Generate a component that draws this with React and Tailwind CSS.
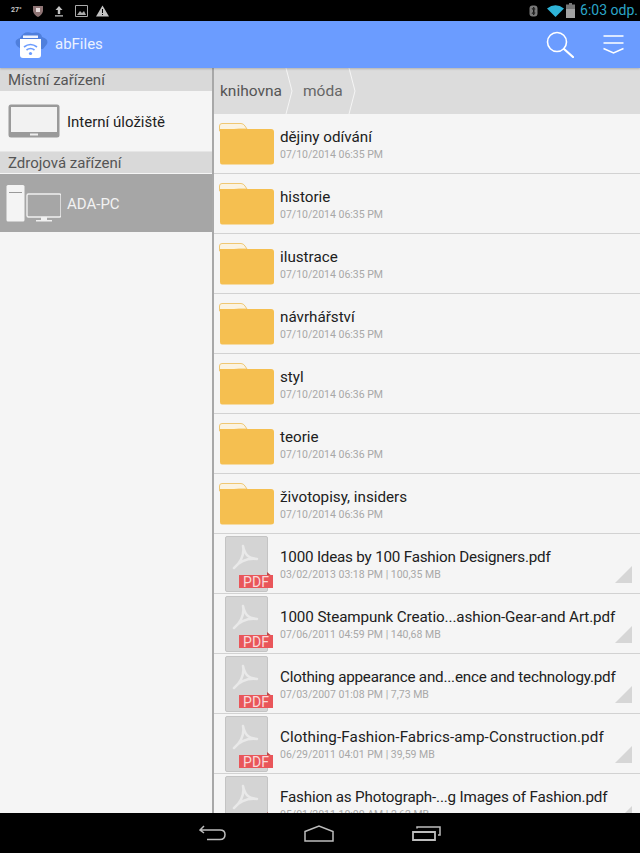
import React from "react";

const Folder = () => (
  <svg width="56" height="42" viewBox="0 0 56 42" className="shrink-0">
    <path d="M0.5 8 V3 Q0.5 0.5 3 0.5 H22 Q24.5 0.5 26 3 L28 6 H20 Z" fill="#fbf3e0" stroke="#f0c873" strokeWidth="1" />
    <path d="M1 6 H52 Q55 6 55 9 V39 Q55 41.5 52 41.5 H3 Q1 41.5 1 39 Z" fill="#f5bf50" />
  </svg>
);

const Pdf = () => (
  <div className="relative w-[50px] h-[56px] shrink-0">
    <div className="absolute left-0 top-0 w-[43px] h-[56px] bg-[#d4d4d4] border border-[#c4c4c4] rounded-[2px]" />
    <svg width="43" height="40" viewBox="0 0 43 40" className="absolute left-0 top-0">
      <path d="M18 10 C20 18 22 22 32 23 M32 23 C22 22 14 26 9 32 M18 10 C20 20 14 28 9 32" fill="none" stroke="#e9e9e9" strokeWidth="2.5" strokeLinecap="round" />
    </svg>
    <svg width="6" height="6" viewBox="0 0 6 6" className="absolute left-[42px] top-[36px]"><path d="M0 0 L6 5 V6 H0 Z" fill="#b94a4a" /></svg>
    <div className="absolute left-[14px] top-[39px] w-[34px] h-[13px] bg-[#e9565a] text-[#f9dada] text-[14px] leading-[14px] text-center">PDF</div>
  </div>
);

const Row = ({ pdf, name, meta, track }) => (
  <div className={`h-[60px] shrink-0 relative flex items-center border-b border-[#d2d2d2] ${pdf ? "pl-[11px]" : "pl-[5px]"}`}>
    {pdf ? <Pdf /> : <div className="pt-[1px]"><Folder /></div>}
    <div className="ml-[5px] flex flex-col pt-[2px]">
      <div className={`text-[15.2px] leading-[19px] text-[#202020] whitespace-nowrap ${track || ""}`}>{name}</div>
      <div className="mt-[1px] text-[10.5px] leading-[14px] text-[#a8a8a8] whitespace-nowrap">{meta}</div>
    </div>
    {pdf && (
      <svg width="17" height="17" viewBox="0 0 17 17" className="absolute right-[8px] bottom-[10px]"><path d="M17 0 V17 H0 Z" fill="#d6d6d6" /></svg>
    )}
  </div>
);

const rows = [
  { name: "dějiny odívání", meta: "07/10/2014 06:35 PM" },
  { name: "historie", meta: "07/10/2014 06:35 PM" },
  { name: "ilustrace", meta: "07/10/2014 06:35 PM" },
  { name: "návrhářství", meta: "07/10/2014 06:35 PM" },
  { name: "styl", meta: "07/10/2014 06:36 PM" },
  { name: "teorie", meta: "07/10/2014 06:36 PM" },
  { name: "životopisy, insiders", meta: "07/10/2014 06:36 PM" },
  { pdf: true, track: "tracking-[-0.2px]", name: "1000 Ideas by 100 Fashion Designers.pdf", meta: "03/02/2013 03:18 PM | 100,35 MB" },
  { pdf: true, track: "tracking-[-0.1px]", name: "1000 Steampunk Creatio...ashion-Gear-and Art.pdf", meta: "07/06/2011 04:59 PM | 140,68 MB" },
  { pdf: true, track: "tracking-[-0.2px]", name: "Clothing appearance and...ence and technology.pdf", meta: "07/03/2007 01:08 PM | 7,73 MB" },
  { pdf: true, track: "tracking-[0.1px]", name: "Clothing-Fashion-Fabrics-amp-Construction.pdf", meta: "06/29/2011 04:01 PM | 39,59 MB" },
  { pdf: true, track: "tracking-[-0.17px]", name: "Fashion as Photograph-...g Images of Fashion.pdf", meta: "05/01/2011 10:00 AM | 2,62 MB" },
];

export default function App() {
  return (
    <div className="w-[640px] h-[853px] flex flex-col overflow-hidden bg-[#f5f5f5] font-['Roboto',sans-serif]">
      {/* status bar */}
      <div className="h-[21px] shrink-0 bg-black flex items-center pl-[11px] pr-[2px] text-[#b4b4b4]">
        <span className="text-[7px] font-bold w-[21px] text-[#c8c8c8]">27°</span>
        <svg width="12" height="12" viewBox="0 0 12 12"><path d="M1 1 H11 V6 Q10 10 6 12 Q2 10 1 6 Z" fill="#8f7474" /><path d="M4 3 H8 V7 H4 Z" fill="#e8dcdc" /></svg>
        <svg width="10" height="12" viewBox="0 0 10 12" className="ml-[10px]"><path d="M5 1 L8.5 5 H6.2 V9 H3.8 V5 H1.5 Z M1 10.3 H9 V11.5 H1 Z" fill="#c4c4c4" /></svg>
        <svg width="13" height="12" viewBox="0 0 13 12" className="ml-[11px]"><path d="M0.5 0.5 H12.5 V11.5 H0.5 Z" fill="none" stroke="#aaa" /><path d="M2 10 L5 6 L7 8 L9 6 L11 10 Z" fill="#aaa" /></svg>
        <svg width="13" height="12" viewBox="0 0 13 12" className="ml-[8px]"><path d="M6.5 0.5 L13 11.5 H0 Z" fill="#c4c4c4" /><path d="M6 4 H7 V8 H6 Z M6 9 H7 V10 H6 Z" fill="#000" /></svg>
        <div className="flex-1" />
        <svg width="9" height="12" viewBox="0 0 9 12"><rect x="0.5" y="0.5" width="8" height="11" rx="3" fill="#7a7a7a" /><path d="M3 3 L6 8 L4.5 10 V2 L6 4 L3 9" fill="none" stroke="#111" strokeWidth="0.8" /></svg>
        <svg width="17" height="12" viewBox="0 0 17 12" className="ml-[9px]"><path d="M0 3.5 Q8.5 -3 17 3.5 L8.5 12 Z" fill="#2fb4d8" /></svg>
        <svg width="9" height="15" viewBox="0 0 9 15" className="ml-[2px]"><path d="M3 0 H6 V1.5 H9 V15 H0 V1.5 H3 Z" fill="#777" /><path d="M0 6 H9 V15 H0 Z" fill="#a2a2a2" /></svg>
        <span className="ml-[5px] text-[14px] text-[#2ba6c8]">6:03 odp.</span>
      </div>

      {/* action bar */}
      <div className="h-[47px] shrink-0 bg-[#6b9cff] flex items-center pl-[15px] pr-[16px] shadow-[0_1px_2px_rgba(0,0,0,0.2)] z-10">
        <svg width="33" height="28" viewBox="0 0 33 28">
          <path d="M2 15 Q-2 9 5 7 Q9 -1 17 2 Q26 0 27 6 Q34 8 32 13 L28 18 H6 Z" fill="#4f7fdc" />
          <path d="M5 8 H26 V24 Q26 27 23 27 H8 Q5 27 5 24 Z" fill="#fff" />
          <path d="M8 4.5 H23 V7 H8 Z" fill="#f0f4ff" />
          <path d="M9 16 Q15.5 11 22 16 M11.5 19 Q15.5 16 19.5 19" fill="none" stroke="#6b9cff" strokeWidth="1.6" />
          <circle cx="15.5" cy="22.5" r="1.6" fill="#6b9cff" />
        </svg>
        <span className="ml-[7px] text-[#eaf1ff] text-[15px]">abFiles</span>
        <div className="flex-1" />
        <svg width="28" height="27" viewBox="0 0 28 27" fill="none" stroke="#fff" strokeWidth="1.6" strokeLinecap="round">
          <circle cx="11" cy="11" r="9.5" />
          <path d="M18 18 L27 26" strokeWidth="2.2" />
        </svg>
        <svg width="21" height="20" viewBox="0 0 21 20" className="ml-[29px]" fill="none" stroke="#fff" strokeWidth="1.4">
          <path d="M0.5 1 H20.5 M0.5 8 H20.5 M0.5 13.5 L10.5 18 L20.5 13.5" />
        </svg>
      </div>

      {/* body */}
      <div className="flex-1 min-h-0 flex">
        <aside className="w-[214px] shrink-0 border-r-2 border-[#a8a8a8] bg-[#f5f5f5]">
          <div className="h-[23px] bg-[#d9d9d9] pl-[8px] text-[15px] leading-[24px] text-[#555]">Místní zařízení</div>
          <div className="h-[60px] flex items-center pl-[8px]">
            <svg width="52" height="34" viewBox="0 0 52 34" className="shrink-0">
              <rect x="0.5" y="0.5" width="51" height="33" rx="2.5" fill="#9a9a9a" />
              <rect x="3" y="3" width="46" height="25" fill="#f2f2f2" />
              <rect x="22" y="29.5" width="8" height="2" fill="#eee" />
            </svg>
            <span className="ml-[7px] pt-[2px] text-[15px] text-[#222]">Interní úložiště</span>
          </div>
          <div className="h-[22px] border-t border-[#e6e6e6] bg-[#d9d9d9] pl-[8px] text-[15px] leading-[22px] text-[#555]">Zdrojová zařízení</div>
          <div className="mt-[1px] h-[58px] bg-[#a6a6a6] flex items-center pl-[6px]">
            <svg width="55" height="37" viewBox="0 0 55 37" className="shrink-0">
              <rect x="0.5" y="0" width="18" height="36.5" rx="1.5" fill="#f4f4f4" />
              <rect x="3" y="7" width="13" height="1" fill="#999" />
              <rect x="21" y="9" width="34" height="23" rx="1.5" fill="#a6a6a6" stroke="#f0f0f0" strokeWidth="1.4" />
              <rect x="35" y="32" width="6" height="3" fill="#f0f0f0" />
              <rect x="30" y="35" width="16" height="1.5" fill="#f0f0f0" />
            </svg>
            <span className="ml-[6px] pt-[2px] text-[15px] text-[#f2f2f2]">ADA-PC</span>
          </div>
        </aside>

        <main className="flex-1 min-w-0 flex flex-col overflow-hidden">
          <div className="h-[46px] shrink-0 bg-[#dcdcdc] relative flex items-center text-[15.5px] text-[#555]">
            <span className="ml-[6px] pt-[2px]">knihovna</span>
            <svg width="10" height="46" viewBox="0 0 10 46" fill="none" stroke="#f5f5f5" strokeWidth="1" className="ml-[3px]"><path d="M1 0 L7 23 L1 46" /></svg>
            <span className="ml-[8px] pt-[2px] text-[#666]">móda</span>
            <svg width="10" height="46" viewBox="0 0 10 46" fill="none" stroke="#f5f5f5" strokeWidth="1" className="ml-[5px]"><path d="M1 0 L7 23 L1 46" /></svg>
          </div>
          {rows.map((r) => (
            <Row key={r.name} {...r} />
          ))}
        </main>
      </div>

      {/* nav bar */}
      <div className="h-[40px] shrink-0 bg-black flex items-center justify-center z-10">
        <svg width="27" height="16" viewBox="0 0 27 16" fill="none" stroke="#bdbdbd" strokeWidth="1.5" className="mr-[78px]">
          <path d="M5 1 L1 5 L5 8 M1 5 H21 Q26 5 26 9.5 Q26 14.5 21 14.5 H8" />
        </svg>
        <svg width="30" height="17" viewBox="0 0 30 17" fill="none" stroke="#bdbdbd" strokeWidth="1.5">
          <path d="M1 6.5 L15 1 L29 6.5 V16 H1 Z" />
        </svg>
        <svg width="29" height="15" viewBox="0 0 29 15" fill="none" stroke="#bdbdbd" strokeWidth="1.5" className="ml-[78px]">
          <path d="M1 6 H23 V14 H1 Z" strokeWidth="1.8" />
          <path d="M5 2.5 V1 H28 V9 H26" />
        </svg>
      </div>
    </div>
  );
}
